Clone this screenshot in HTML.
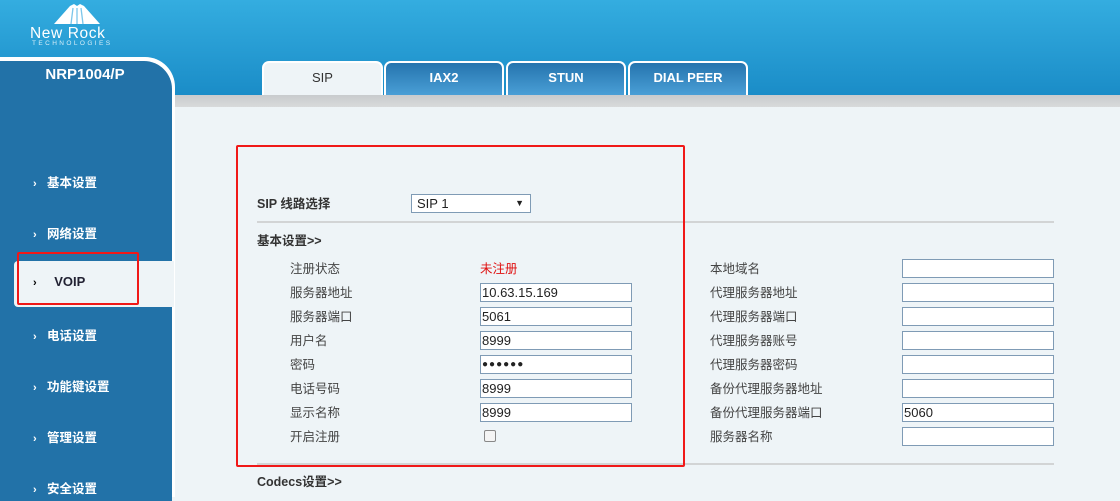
<!DOCTYPE html>
<html><head><meta charset="utf-8"><style>
*{margin:0;padding:0;box-sizing:border-box}
body{width:1120px;height:493px;overflow:hidden;position:relative;font-family:"Liberation Sans","Noto Sans CJK SC",sans-serif;background:#eef4f7;font-size:12px;color:#333}
.hdr{position:absolute;left:0;top:0;width:1120px;height:96px;background:linear-gradient(#34ade0,#1a8cc7)}
.gray{position:absolute;left:175px;top:95px;width:945px;height:12px;background:linear-gradient(#c8cbcd,#d8dadb)}
.side{position:absolute;left:0;top:57px;width:175px;height:440px;background:#fff;border-top-right-radius:30px}
.sidein{position:absolute;left:0;top:61px;width:172px;height:440px;background:#2272a8;border-top-right-radius:28px}
.model{position:absolute;left:0;top:66px;width:170px;text-align:center;color:#fff;font-weight:bold;font-size:15px}
.mi{position:absolute;left:33px;color:#fff;font-weight:bold;font-size:12.5px}
.mi span{display:inline-block;width:14px;font-size:11px}
.voip{position:absolute;left:14px;top:261px;width:160px;height:46px;background:#eef4f7;border-radius:4px 0 0 4px}
.tab{position:absolute;top:61px;height:34px;border:2px solid #fff;border-bottom:none;border-radius:7px 7px 0 0;background:linear-gradient(#2574ae,#4a9fd6);color:#fff;text-align:center;line-height:29px;font-size:13px;font-weight:bold}
.tab.a{background:#eef4f7;color:#333;font-weight:normal}
.lbl{position:absolute;font-size:12.5px;color:#444}
.in{position:absolute;width:152px;height:19px;background:#fff;border:1px solid #7f9bb5;font-size:13px;line-height:17px;padding-left:1px;color:#222}
.line{position:absolute;left:257px;width:797px;height:2px;background:#d2d4d5}
.red{position:absolute;border:2px solid #f01818;border-radius:2px}
</style></head><body>
<div class="hdr"></div>
<svg style="position:absolute;left:50px;top:2px" width="54" height="24" viewBox="0 0 54 24">
<path d="M4 22 L20 4 L24 2 L27 4 L30 2 L34 4 L50 22 Z" fill="#fff"/>
<path d="M21 22 L23 6 M27 22 L27 6 M33 22 L31 6" stroke="#7cc6ea" stroke-width="1.3"/>
</svg>
<div style="position:absolute;left:30px;top:25px;color:#fff;font-size:15.5px;letter-spacing:0.6px">New Rock</div>
<div style="position:absolute;left:32px;top:40px;color:#d8eef8;font-size:6.5px;letter-spacing:2.4px">TECHNOLOGIES</div>
<div class="gray"></div>
<div class="side"></div><div class="sidein"></div>
<div class="model">NRP1004/P</div>
<div class="mi" style="top:172px"><span>›</span>基本设置</div>
<div class="mi" style="top:223px"><span>›</span>网络设置</div>
<div class="voip"></div>
<div class="mi" style="top:274px;color:#223;font-size:13px"><span style="color:#000">›</span>&nbsp;&nbsp;VOIP</div>
<div class="mi" style="top:325px"><span>›</span>电话设置</div>
<div class="mi" style="top:376px"><span>›</span>功能键设置</div>
<div class="mi" style="top:427px"><span>›</span>管理设置</div>
<div class="mi" style="top:478px"><span>›</span>安全设置</div>
<div class="red" style="left:17px;top:252px;width:122px;height:53px"></div>
<div class="tab a" style="left:262px;width:121px">SIP</div>
<div class="tab" style="left:384px;width:120px">IAX2</div>
<div class="tab" style="left:506px;width:120px">STUN</div>
<div class="tab" style="left:628px;width:120px">DIAL PEER</div>
<div class="lbl" style="left:257px;top:193px;font-weight:bold;color:#333">SIP 线路选择</div>
<div class="in" style="left:411px;top:194px;width:120px;height:19px;padding-left:5px">SIP 1<span style="position:absolute;right:6px;font-size:9px">▼</span></div>
<div class="line" style="top:221px"></div>
<div class="lbl" style="left:257px;top:230px;font-weight:bold;color:#333">基本设置&gt;&gt;</div>
<div class="lbl" style="left:290px;top:258px">注册状态</div>
<div class="lbl" style="left:480px;top:258px;color:#e01010">未注册</div>
<div class="lbl" style="left:290px;top:282px">服务器地址</div><div class="in" style="left:480px;top:283px">10.63.15.169</div>
<div class="lbl" style="left:290px;top:306px">服务器端口</div><div class="in" style="left:480px;top:307px">5061</div>
<div class="lbl" style="left:290px;top:330px">用户名</div><div class="in" style="left:480px;top:331px">8999</div>
<div class="lbl" style="left:290px;top:354px">密码</div><div class="in" style="left:480px;top:355px;font-size:10px;letter-spacing:1px">●●●●●●</div>
<div class="lbl" style="left:290px;top:378px">电话号码</div><div class="in" style="left:480px;top:379px">8999</div>
<div class="lbl" style="left:290px;top:402px">显示名称</div><div class="in" style="left:480px;top:403px">8999</div>
<div class="lbl" style="left:290px;top:426px">开启注册</div>
<div style="position:absolute;left:484px;top:430px;width:12px;height:12px;border:1px solid #888;border-radius:2px;background:#f4f4f4"></div>
<div class="lbl" style="left:710px;top:258px">本地域名</div><div class="in" style="left:902px;top:259px"></div>
<div class="lbl" style="left:710px;top:282px">代理服务器地址</div><div class="in" style="left:902px;top:283px"></div>
<div class="lbl" style="left:710px;top:306px">代理服务器端口</div><div class="in" style="left:902px;top:307px"></div>
<div class="lbl" style="left:710px;top:330px">代理服务器账号</div><div class="in" style="left:902px;top:331px"></div>
<div class="lbl" style="left:710px;top:354px">代理服务器密码</div><div class="in" style="left:902px;top:355px"></div>
<div class="lbl" style="left:710px;top:378px">备份代理服务器地址</div><div class="in" style="left:902px;top:379px"></div>
<div class="lbl" style="left:710px;top:402px">备份代理服务器端口</div><div class="in" style="left:902px;top:403px">5060</div>
<div class="lbl" style="left:710px;top:426px">服务器名称</div><div class="in" style="left:902px;top:427px"></div>
<div class="line" style="top:463px"></div>
<div class="lbl" style="left:257px;top:471px;font-weight:bold;color:#333">Codecs设置&gt;&gt;</div>
<div class="red" style="left:236px;top:145px;width:449px;height:322px"></div>
</body></html>
